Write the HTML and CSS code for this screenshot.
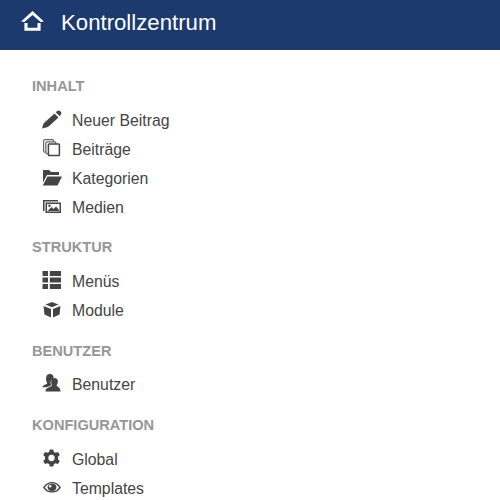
FILE: index.html
```html
<!DOCTYPE html>
<html lang="de">
<head>
<meta charset="utf-8">
<title>Kontrollzentrum</title>
<link rel="stylesheet" href="styles.css">
</head>
<body>
<header class="topbar">
  <svg class="home" viewBox="0 0 24 21"><path d="M12 0 L24 11 L20.500 11.500 L12 4.200 L3.500 11.500 L0 11 Z" fill="#fff"/><path d="M3.500 12.500 H6.800 V17.500 H17.200 V12.500 H20.500 V20.800 H3.500 Z" fill="#fff"/></svg>
  <h1 class="title">Kontrollzentrum</h1>
</header>
<main class="content">
  <section class="group">
    <h2 class="label">INHALT</h2>
    <ul class="list">
      <li class="item"><svg class="icon" viewBox="0 0 20 20"><path d="M0 17.500 L1.500 12.500 L12.500 2.500 L16.500 6.500 L6 16 Z M13.800 1.200 L15 0 Q16.500 -1.200 18 0 L19 1 Q20 2.300 18.700 3.800 L17.700 5.200 Z"/></svg><span>Neuer Beitrag</span></li>
      <li class="item"><svg class="icon" viewBox="0 0 20 20"><rect class="page-back" x="1.600" y="-0.400" width="10" height="12.500" rx="1.200"/><rect class="page-back" x="3.800" y="1.800" width="10" height="12" rx="1.200"/><rect class="page-front" x="6.400" y="4" width="11" height="11.600" rx="0.800"/></svg><span>Beiträge</span></li>
      <li class="item"><svg class="icon" viewBox="0 0 20 20"><path d="M1 1 H7 L9 3 H17 V6 H5 L1 13.500 Z M5.500 7.500 H20 L15.500 16.500 H0.800 Z"/></svg><span>Kategorien</span></li>
      <li class="item"><svg class="icon" viewBox="0 0 20 20"><path d="M1 2 H16 V3.500 H2.500 V13 H1 Z"/><path fill-rule="evenodd" d="M3.500 4.500 H19 V15 H3.500 Z M5 6 V13.500 H17.500 V6 Z"/><path d="M5.500 13 L9.500 9 L11.500 11 L14 8.500 L17 12 V13 Z"/><circle cx="7.500" cy="7.800" r="1.200"/></svg><span>Medien</span></li>
    </ul>
  </section>
  <section class="group">
    <h2 class="label">STRUKTUR</h2>
    <ul class="list">
      <li class="item"><svg class="icon" viewBox="0 0 20 20"><path d="M0.500 -1 H6 V4 H0.500 Z M7.800 -1 H19 V4 H7.800 Z M0.500 5.500 H6 V10.500 H0.500 Z M7.800 5.500 H19 V10.500 H7.800 Z M0.500 12 H6 V17 H0.500 Z M7.800 12 H19 V17 H7.800 Z"/></svg><span>Menüs</span></li>
      <li class="item"><svg class="icon" viewBox="0 0 20 20"><path d="M10 1 L16.500 3.500 L10 6.300 L3.500 3.500 Z M1.500 5 L9 8 V16.500 L2.500 13.500 Z M18.500 5 L11 8 V16.500 L17.500 13.500 Z"/></svg><span>Module</span></li>
    </ul>
  </section>
  <section class="group">
    <h2 class="label">BENUTZER</h2>
    <ul class="list">
      <li class="item"><svg class="icon" viewBox="0 0 20 20"><path d="M7.500 -1 C10.500 -1 12 1 11.500 3.500 C9.500 4.500 8.300 6 8.500 8 L9.500 10 C8.500 10.800 6.500 11.500 4.500 12.300 L0.300 12.300 C0.500 10.500 3 9.800 5 8.800 C5.300 8 5 7.500 4.500 6.800 C3.500 4 4 -1 7.500 -1 Z"/><path d="M12.500 3 C15.500 3 16.500 6 15.500 8.500 C15 9.500 14.500 10 14.800 11 C16 12 18.500 12.500 18.500 16.500 H3.500 C3.500 13 7 12.300 9.500 11 C10.300 10 9.800 9.500 9.500 8.800 C8.500 6.500 9.500 3 12.500 3 Z"/></svg><span>Benutzer</span></li>
    </ul>
  </section>
  <section class="group">
    <h2 class="label">KONFIGURATION</h2>
    <ul class="list">
      <li class="item"><svg class="icon" viewBox="0 0 20 20"><path transform="translate(0.500 -1) scale(0.900)" fill-rule="evenodd" d="M8 0.500 H12 L12.600 3.200 L14.600 4.300 L17.200 3.400 L19.200 6.800 L17.200 8.700 V11.300 L19.200 13.200 L17.200 16.600 L14.600 15.700 L12.600 16.800 L12 19.500 H8 L7.400 16.800 L5.400 15.700 L2.800 16.600 L0.800 13.200 L2.800 11.300 V8.700 L0.800 6.800 L2.800 3.400 L5.400 4.300 L7.400 3.200 Z M10 6.500 A3.500 3.500 0 1 0 10 13.500 A3.500 3.500 0 1 0 10 6.500 Z"/></svg><span>Global</span></li>
      <li class="item"><svg class="icon" viewBox="0 0 20 20"><g transform="translate(1 0) scale(0.900 0.850)"><path fill-rule="evenodd" d="M10 3.500 C14.500 3.500 18 6.500 20 10 C18 13.500 14.500 16 10 16 C5.500 16 2 13.500 0 10 C2 6.500 5.500 3.500 10 3.500 Z M10 5 C6.500 5 3.800 7 2 10 C3.800 12.500 6.500 14.500 10 14.500 C13.500 14.500 16.200 12.500 18 10 C16.200 7 13.500 5 10 5 Z"/><path fill-rule="evenodd" d="M10 5.500 A4.300 4.300 0 1 1 10 14 A4.300 4.300 0 1 1 10 5.500 Z M8 7 A1.500 1.500 0 1 0 8 10 A1.500 1.500 0 1 0 8 7 Z"/></g></svg><span>Templates</span></li>
    </ul>
  </section>
</main>
</body>
</html>
```
FILE: styles.css
```css
html, body {
  margin: 0;
  padding: 0;
  height: 500px;
  overflow: hidden;
  background: #fff;
  font-family: "Liberation Sans", Arial, sans-serif;
}
.topbar {
  display: flex;
  align-items: center;
  gap: 17px;
  height: 50px;
  padding: 0 0 5px 21px;
  box-sizing: border-box;
  background: #1c3a6e;
  color: #fff;
}
.home {
  width: 23px;
  height: 20px;
  flex: none;
  margin-top: -4px;
}
.title {
  margin: 0;
  font-size: 22.2px;
  font-weight: 400;
  line-height: 30px;
}
.content {
  display: flex;
  flex-direction: column;
  gap: 15.4px;
  padding: 26px 0 0 32px;
}
.label {
  margin: 0 0 10px;
  font-size: 14.6px;
  font-weight: 700;
  line-height: 20px;
  color: #969696;
}
.list {
  list-style: none;
  margin: 0;
  padding: 0 0 0 10px;
}
.item {
  display: flex;
  align-items: center;
  gap: 10px;
  height: 29px;
  font-size: 15.8px;
  color: #444;
}
.icon {
  width: 20px;
  height: 20px;
  flex: none;
  fill: #444;
  overflow: visible;
}
.page-back {
  fill: #fff;
  stroke: #666;
  stroke-width: 1.2;
}
.page-front {
  fill: #fff;
  stroke: #444;
  stroke-width: 1.5;
}
```
